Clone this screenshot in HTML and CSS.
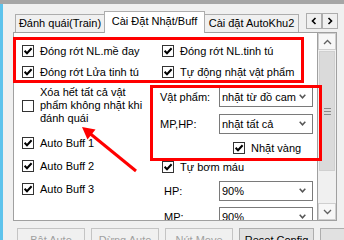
FILE: index.html
```
<!DOCTYPE html>
<html lang="vi">
<head>
    <meta charset="UTF-8">
    <title>Cài Đặt Nhặt/Buff</title>
    <link rel="stylesheet" href="styles.css">
</head>
<body>
    <div class="topbar"></div>
    <div class="frame">
        <div class="edge"></div>
        <div class="main">
            <div class="tabstrip">
                <div class="tab">Đánh quái(Train)</div>
                <div class="tab active">Cài Đặt Nhặt/Buff</div>
                <div class="tab">Cài đặt AutoKhu2</div>
                <div class="tabnav">
                    <span class="navbtn"><svg width="6" height="8" viewBox="0 0 6 8"><path d="M4.5 1 L1.5 4 L4.5 7" fill="none" stroke="#000" stroke-width="1.6"/></svg></span>
                    <span class="navbtn"><svg width="6" height="8" viewBox="0 0 6 8"><path d="M1.5 1 L4.5 4 L1.5 7" fill="none" stroke="#000" stroke-width="1.6"/></svg></span>
                </div>
            </div>

            <div class="panel">
                <div class="content">
                    <div class="toprow">
                        <label class="chk"><span class="box on"></span>Đóng rớt NL.mề đay</label>
                        <label class="chk"><span class="box on"></span>Đóng rớt NL.tinh tú</label>
                        <label class="chk"><span class="box on"></span>Đóng rớt Lửa tinh tú</label>
                        <label class="chk"><span class="box on"></span>Tự động nhặt vật phẩm</label>
                    </div>

                    <div class="cols">
                        <div class="left">
                            <label class="chk multi"><span class="box"></span><span>Xóa hết tất cả vật<br>phẩm không nhặt khi<br>đánh quái</span></label>
                            <label class="chk buff1"><span class="box on"></span>Auto Buff 1</label>
                            <label class="chk buff"><span class="box on"></span>Auto Buff 2</label>
                            <label class="chk buff"><span class="box on"></span>Auto Buff 3</label>
                        </div>
                        <div class="right">
                            <div class="field first">
                                <span class="lbl">Vật phẩm:</span>
                                <span class="select">nhặt từ đồ cam<i class="caret"></i></span>
                            </div>
                            <div class="field">
                                <span class="lbl">MP,HP:</span>
                                <span class="select">nhặt tất cả<i class="caret"></i></span>
                            </div>
                            <label class="chk gold"><span class="box on"></span>Nhặt vàng</label>
                            <label class="chk pump"><span class="box on"></span>Tự bơm máu</label>
                            <div class="field">
                                <span class="lbl sub">HP:</span>
                                <span class="select">90%<i class="caret"></i></span>
                            </div>
                            <div class="field last">
                                <span class="lbl sub">MP:</span>
                                <span class="select">90%<i class="caret"></i></span>
                            </div>
                        </div>
                    </div>
                </div>

                <div class="scrollbar">
                    <div class="sbtn"><svg width="9" height="6" viewBox="0 0 9 6"><path d="M1 5 L4.5 1.5 L8 5" fill="none" stroke="#606060" stroke-width="1.3"/></svg></div>
                    <div class="track">
                        <div class="thumb"><span class="grip"></span></div>
                    </div>
                    <div class="sbtn"><svg width="9" height="6" viewBox="0 0 9 6"><path d="M1 1 L4.5 4.5 L8 1" fill="none" stroke="#606060" stroke-width="1.3"/></svg></div>
                </div>
            </div>

            <div class="btnrow">
                <button class="btn" disabled>Bật Auto</button>
                <button class="btn" disabled>Dừng Auto</button>
                <button class="btn" disabled>Nút Move</button>
                <button class="btn wide">Reset Config</button>
                <button class="btn">Bật</button>
            </div>
        </div>
    </div>

    <!-- red annotations drawn over the form -->
    <div class="mark mark-top"></div>
    <div class="mark mark-pick"></div>
    <svg class="arrow" width="344" height="240" viewBox="0 0 344 240">
        <line x1="136" y1="171" x2="90" y2="133.5" stroke="#ff0000" stroke-width="3"/>
        <polygon points="82,127 95.5,129.5 87.5,139.5" fill="#ff0000"/>
    </svg>
</body>
</html>
```

FILE: styles.css
```
body {
    margin: 0;
    width: 344px;
    height: 240px;
    overflow: hidden;
    position: relative;
    background-color: #f0f0f0;
    color: #000;
    font-family: "Liberation Sans", Arial, sans-serif;
    font-size: 11px;
}

.topbar {
    height: 4px;
    background-color: #a6a6a6;
}

.frame {
    display: flex;
    height: 236px;
}

.edge {
    flex: none;
    width: 3px;
    background-color: #5ec3ec;
}

.main {
    flex: 1;
    min-width: 0;
    padding-left: 10px;
}

/* tab header */
.tabstrip {
    display: flex;
    align-items: flex-end;
    height: 22px;
    margin-top: 6px;
    padding-left: 2px;
}

.tab {
    flex: none;
    box-sizing: border-box;
    height: 18px;
    line-height: 16px;
    text-align: center;
    border: 1px solid #adadad;
    border-bottom: none;
    background-color: #f0f0f0;
    white-space: nowrap;
}

.tab:nth-child(1) {
    width: 90px;
}

.tab:nth-child(3) {
    width: 95px;
    margin-left: -1px;
}

.tab.active {
    position: relative;
    z-index: 1;
    width: 101px;
    height: 22px;
    line-height: 19px;
    margin-left: -1px;
    margin-bottom: -1px;
    background-color: #fff;
}

.tabnav {
    display: flex;
    align-self: flex-start;
    margin-top: 3px;
    margin-left: auto;
    margin-right: 6px;
}

.navbtn {
    box-sizing: border-box;
    width: 16px;
    height: 16px;
    border: 1px solid #adadad;
    background-color: #f0f0f0;
    display: flex;
    align-items: center;
    justify-content: center;
}

/* tab page */
.panel {
    box-sizing: border-box;
    display: flex;
    height: 189px;
    margin-right: 7px;
    border: 1px solid #a0a0a0;
    background-color: #fff;
}

.content {
    flex: 1;
    min-width: 0;
    overflow: hidden;
    padding-left: 8px;
}

.chk {
    display: flex;
    align-items: center;
    gap: 6px;
    height: 14px;
    line-height: 14px;
    white-space: nowrap;
}

.box {
    box-sizing: border-box;
    flex: none;
    width: 12px;
    height: 12px;
    border: 1px solid #333;
    background-color: #fff;
}

.box.on {
    background: #fff url("data:image/svg+xml;utf8,<svg xmlns='http://www.w3.org/2000/svg' width='10' height='10' viewBox='0 0 10 10'><path d='M1.6 4.8 L4 7.3 L8.6 2.3' fill='none' stroke='black' stroke-width='2'/></svg>") no-repeat center;
}

.toprow {
    display: grid;
    grid-template-columns: 140px auto;
    row-gap: 7px;
    margin-top: 11px;
}

.cols {
    display: grid;
    grid-template-columns: 136px auto;
    margin-top: 7px;
}

.chk.multi {
    height: 39px;
    line-height: 13px;
}

.buff1 {
    margin-top: 11px;
}

.buff {
    margin-top: 9px;
}

.right {
    display: flex;
    flex-direction: column;
}

.field {
    display: flex;
    align-items: center;
    height: 20px;
    margin-top: 7px;
}

.field.first {
    margin-top: 1px;
}

.field.last {
    margin-top: 6px;
}

.lbl {
    width: 61px;
    padding-left: 2px;
    box-sizing: border-box;
}

.lbl.sub {
    padding-left: 6px;
}

.select {
    position: relative;
    box-sizing: border-box;
    width: 94px;
    height: 20px;
    line-height: 18px;
    padding-left: 2px;
    border: 1px solid #7a7a7a;
    background-color: #fff;
}

.caret {
    position: absolute;
    right: 6px;
    top: 6px;
    width: 7px;
    height: 5px;
    background: url("data:image/svg+xml;utf8,<svg xmlns='http://www.w3.org/2000/svg' width='7' height='5' viewBox='0 0 7 5'><path d='M0.7 0.8 L3.5 3.8 L6.3 0.8' fill='none' stroke='%23555' stroke-width='1.5'/></svg>") no-repeat;
}

.gold {
    margin-top: 7px;
    padding-left: 75px;
}

.pump {
    margin-top: 5px;
    padding-left: 4px;
}

/* vertical scrollbar */
.scrollbar {
    flex: none;
    display: flex;
    flex-direction: column;
    width: 19px;
    box-sizing: border-box;
    border-left: 1px solid #a0a0a0;
    background-color: #f0f0f0;
}

.sbtn {
    height: 17px;
    box-sizing: border-box;
    border: 1px solid #cfcfcf;
    background-color: #f7f7f7;
    display: flex;
    align-items: center;
    justify-content: center;
}

.track {
    flex: 1;
    padding-top: 1px;
}

.thumb {
    box-sizing: border-box;
    height: 120px;
    margin: 0 1px;
    background-color: #dadada;
    border: 1px solid #d0d0d0;
    display: flex;
    align-items: center;
    justify-content: center;
}

.grip {
    width: 7px;
    height: 5px;
    border-top: 1px solid #8a8a8a;
    border-bottom: 1px solid #8a8a8a;
    background: linear-gradient(#8a8a8a, #8a8a8a) no-repeat center / 7px 1px;
}

/* bottom buttons */
.btnrow {
    display: flex;
    gap: 6px;
    margin-top: 7px;
    padding-left: 4px;
}

.btn {
    flex: none;
    box-sizing: border-box;
    width: 68px;
    height: 23px;
    padding: 0;
    font-family: inherit;
    font-size: 11px;
    color: #000;
    background-color: #e1e1e1;
    border: 1px solid #adadad;
}

.btn.wide {
    width: 75px;
}

.btn:disabled {
    color: #a0a0a0;
    background-color: #f0f0f0;
    border-color: #c4c4c4;
}

/* annotations */
.mark {
    position: absolute;
    box-sizing: border-box;
    border: 3px solid #ff0000;
}

.mark-top {
    left: 13px;
    top: 37px;
    width: 291px;
    height: 46px;
}

.mark-pick {
    left: 150px;
    top: 85px;
    width: 172px;
    height: 76px;
}

.arrow {
    position: absolute;
    left: 0;
    top: 0;
    pointer-events: none;
}
```
